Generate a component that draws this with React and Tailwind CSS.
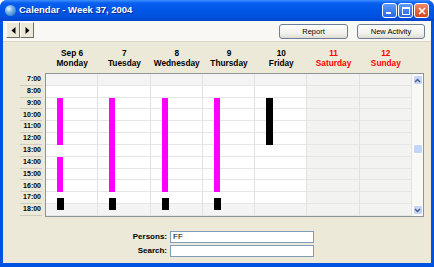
import React from 'react';

const days = [
  { top: 'Sep 6', name: 'Monday', weekend: false },
  { top: '7', name: 'Tuesday', weekend: false },
  { top: '8', name: 'Wednesday', weekend: false },
  { top: '9', name: 'Thursday', weekend: false },
  { top: '10', name: 'Friday', weekend: false },
  { top: '11', name: 'Saturday', weekend: true },
  { top: '12', name: 'Sunday', weekend: true },
];

const hours = ['7:00', '8:00', '9:00', '10:00', '11:00', '12:00', '13:00', '14:00', '15:00', '16:00', '17:00', '18:00'];

const ROW = 142 / 12;

// [day index, start hour, end hour, colour]
const events = [
  [0, 9, 13, 'pink'], [0, 14, 17, 'pink'], [0, 17.5, 18.5, 'black'],
  [1, 9, 17, 'pink'], [1, 17.5, 18.5, 'black'],
  [2, 9, 17, 'pink'], [2, 17.5, 18.5, 'black'],
  [3, 9, 17, 'pink'], [3, 17.5, 18.5, 'black'],
  [4, 9, 13, 'black'],
];

function Chevron({ up }) {
  return (
    <svg width="7" height="5" viewBox="0 0 7 5">
      <path d={up ? 'M1 4 L3.5 1.5 L6 4' : 'M1 1 L3.5 3.5 L6 1'} fill="none" stroke="#4D6185" strokeWidth="1.5" />
    </svg>
  );
}

function TitleBar() {
  return (
    <div className="h-[21px] flex items-center bg-[linear-gradient(to_bottom,#3D8FFF_0%,#0A5FF0_14%,#0056E6_45%,#0052DF_80%,#0044C8_100%)]">
      <div className="ml-[5px] w-[11px] h-[11px] rounded-full bg-[radial-gradient(circle_at_35%_35%,#E8F4FF_0%,#6FB0E8_40%,#1F5FA8_100%)]" />
      <span className="ml-[3px] text-white font-bold text-[9.5px] [text-shadow:1px_1px_0_#0A2A8C]">Calendar - Week 37, 2004</span>
      <div className="ml-auto mr-[5px] flex gap-[1px]">
        <div className="w-[15px] h-[15px] rounded-[3px] border border-white bg-[linear-gradient(to_bottom,#5E9BFF,#2663E8)] flex items-end pl-[3px] pb-[3px]">
          <div className="w-[5px] h-[2px] bg-white" />
        </div>
        <div className="w-[15px] h-[15px] rounded-[3px] border border-white bg-[linear-gradient(to_bottom,#5E9BFF,#2663E8)] flex items-center justify-center">
          <div className="w-[8px] h-[8px] border border-white border-t-2" />
        </div>
        <div className="w-[15px] h-[15px] rounded-[3px] border border-white bg-[linear-gradient(to_bottom,#F08A66,#D8441C)] flex items-center justify-center">
          <svg width="8" height="8" viewBox="0 0 8 8">
            <path d="M1 1 L7 7 M7 1 L1 7" stroke="white" strokeWidth="1.6" />
          </svg>
        </div>
      </div>
    </div>
  );
}

function XpButton({ children, className }) {
  return (
    <div className={`h-[15px] rounded-[3px] border border-[#6E7E97] bg-[linear-gradient(to_bottom,#FFFFFF,#F0EFEA_70%,#DCDAD0)] flex items-center justify-center text-[7.5px] text-black ${className}`}>
      {children}
    </div>
  );
}

function ArrowButton({ left }) {
  return (
    <div className="w-[14px] h-[16px] bg-[#ECE9D8] border border-t-white border-l-white border-r-[#716F64] border-b-[#716F64] flex items-center justify-center">
      <svg width="5" height="7" viewBox="0 0 5 7">
        <path d={left ? 'M4.5 0 L0.5 3.5 L4.5 7 Z' : 'M0.5 0 L4.5 3.5 L0.5 7 Z'} fill="black" />
      </svg>
    </div>
  );
}

export default function App() {
  return (
    <div className="w-[434px] h-[267px] flex flex-col bg-[#0052E0] rounded-t-[7px] overflow-hidden font-['Liberation_Sans',Arial,sans-serif]">
      <TitleBar />
      <div className="flex-1 ml-[3px] mr-[3px] mb-[4px] bg-[#ECE9D8] flex flex-col">
        {/* toolbar */}
        <div className="h-[21px] bg-[#F9F8F4] border-b border-[#D8D5C8] flex items-start">
          <div className="ml-[3px] mt-[1px] flex">
            <ArrowButton left />
            <ArrowButton />
          </div>
          <XpButton className="ml-auto mt-[3px] w-[69px]">Report</XpButton>
          <XpButton className="ml-[9px] mr-[6px] mt-[3px] w-[68px]">New Activity</XpButton>
        </div>

        {/* day headers */}
        <div className="h-[31px] flex items-end pb-[5px] pl-[43px]">
          <div className="grid grid-cols-7 w-[366px] text-center font-bold text-[8.3px] leading-[10px]">
            {days.map(d => (
              <div key={d.name} className={d.weekend ? 'text-[#FF0000]' : 'text-black'}>
                <div>{d.top}</div>
                <div>{d.name}</div>
              </div>
            ))}
          </div>
        </div>

        {/* grid */}
        <div className="flex">
          <div className="w-[42px] pt-[1px] flex flex-col items-end pr-[3px]">
            {hours.map(h => (
              <div key={h} className="w-[22px] h-[11.83px] flex items-center justify-end border-b border-[#CFCCBE] text-[7px] font-bold text-black pr-[1px]">
                {h}
              </div>
            ))}
          </div>
          <div className="w-[379px] h-[144px] border border-[#8E9496] bg-white flex">
            <div className="grid grid-cols-7 w-[366px] h-[142px]">
              {days.map((d, di) => (
                <div key={d.name} className={`relative flex flex-col border-r border-[#E2E2E2] ${d.weekend ? 'bg-[#F3F3F1]' : 'bg-white'}`}>
                  {hours.map((h, hi) => (
                    <div key={h} className={`h-[11.83px] border-b border-[#E6E6E6] ${!d.weekend && (hi === 0 || hi === 11) ? 'bg-[#F4F4F4]' : ''}`} />
                  ))}
                  {events.filter(e => e[0] === di).map((e, i) => (
                    <div
                      key={i}
                      className={`absolute ${e[3] === 'pink' ? 'bg-[#FF00FF] w-[6px] left-[11px]' : 'bg-black w-[7px] left-[11px]'}`}
                      style={{ top: (e[1] - 7) * ROW, height: (e[2] - e[1]) * ROW }}
                    />
                  ))}
                </div>
              ))}
            </div>
            <div className="w-[11px] h-[142px] bg-[#F8F8F4] flex flex-col items-center pt-[1px]">
              <div className="w-[10px] h-[10px] rounded-[2px] border border-white bg-[#C4D5FC] flex items-center justify-center">
                <Chevron up />
              </div>
              <div className="mt-[59px] w-[10px] h-[10px] rounded-[2px] border border-white bg-[#C4D5FC]" />
              <div className="mt-auto mb-[1px] w-[10px] h-[10px] rounded-[2px] border border-white bg-[#C4D5FC] flex items-center justify-center">
                <Chevron />
              </div>
            </div>
          </div>
        </div>

        {/* search form */}
        <div className="mt-[14px] flex flex-col gap-[2px]">
          {[['Persons:', 'FF'], ['Search:', '']].map(([label, value]) => (
            <div key={label} className="flex items-center">
              <div className="w-[164px] text-right font-bold text-[8px] text-black">{label}</div>
              <div className="ml-[3px] w-[144px] h-[12px] border border-[#7F9DB9] bg-white text-[8px] leading-[10px] pl-[2px] text-black">{value}</div>
            </div>
          ))}
        </div>
      </div>
    </div>
  );
}
